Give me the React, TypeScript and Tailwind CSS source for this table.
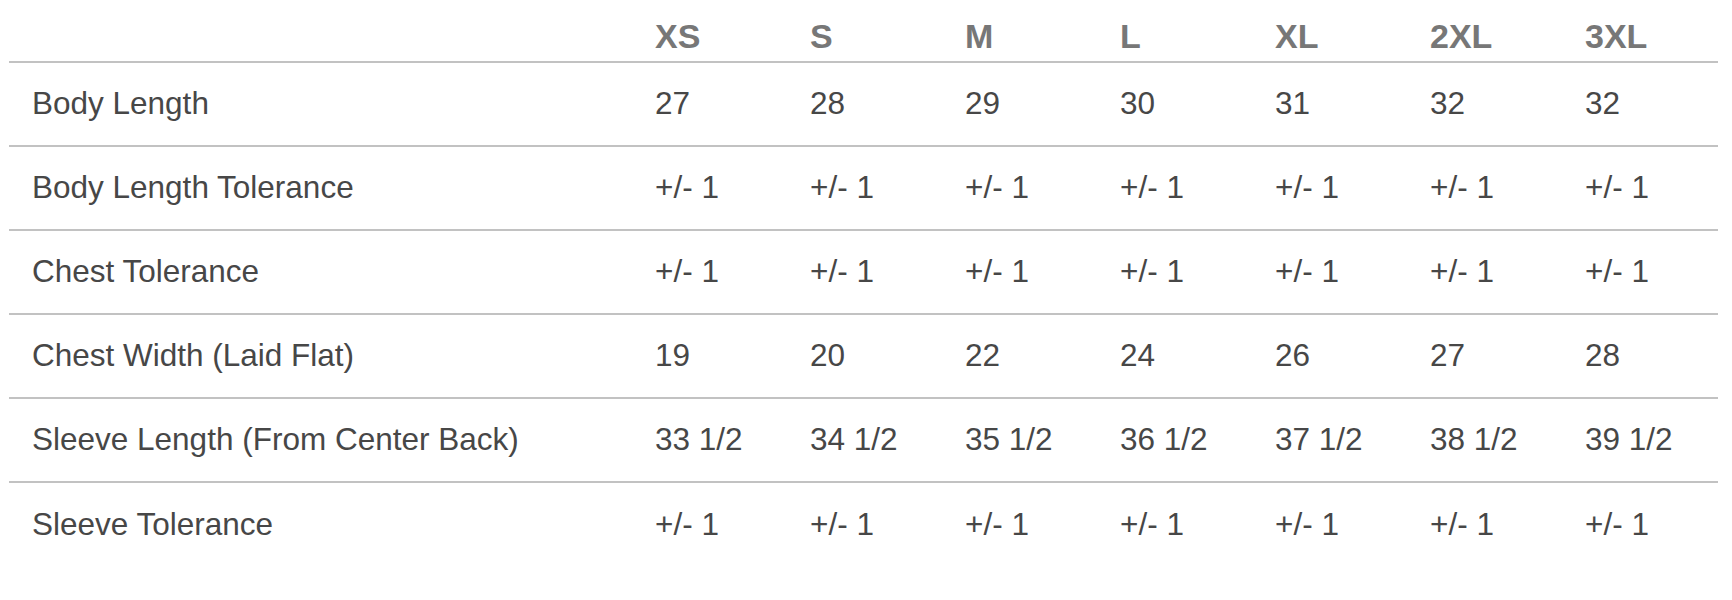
const sizes = ["XS", "S", "M", "L", "XL", "2XL", "3XL"];

const rows: { label: string; values: string[] }[] = [
    { label: "Body Length", values: ["27", "28", "29", "30", "31", "32", "32"] },
    { label: "Body Length Tolerance", values: Array(7).fill("+/- 1") },
    { label: "Chest Tolerance", values: Array(7).fill("+/- 1") },
    { label: "Chest Width (Laid Flat)", values: ["19", "20", "22", "24", "26", "27", "28"] },
    {
        label: "Sleeve Length (From Center Back)",
        values: ["33 1/2", "34 1/2", "35 1/2", "36 1/2", "37 1/2", "38 1/2", "39 1/2"],
    },
    { label: "Sleeve Tolerance", values: Array(7).fill("+/- 1") },
];

const App = () => {
    return (
        <div className="min-h-[600px] bg-white [font-family:Liberation_Sans,Arial,sans-serif]">
            <div className="ml-[9px] w-[1709px]">
                {/* header row */}
                <div className="grid grid-cols-[624px_repeat(7,155px)] h-[63px] border-b-2 border-[#c2c2c2]">
                    <div />
                    {sizes.map((size) => (
                        <div
                            key={size}
                            className="pl-[22px] pt-[19px] text-[34px] leading-none font-bold text-[#777777]">
                            {size}
                        </div>
                    ))}
                </div>
                {/* body rows */}
                {rows.map((row, index) => (
                    <div
                        key={row.label}
                        className={`grid grid-cols-[624px_repeat(7,155px)] h-[84px] ${
                            index < rows.length - 1 ? "border-b-2 border-[#c2c2c2]" : ""
                        }`}>
                        <div className="flex items-center pl-[23px] text-[31.5px] leading-none text-[#474747]">
                            {row.label}
                        </div>
                        {row.values.map((value, i) => (
                            <div
                                key={i}
                                className="flex items-center pl-[22px] text-[31.5px] leading-none text-[#474747] whitespace-nowrap">
                                {value}
                            </div>
                        ))}
                    </div>
                ))}
            </div>
        </div>
    );
};

export default App;
